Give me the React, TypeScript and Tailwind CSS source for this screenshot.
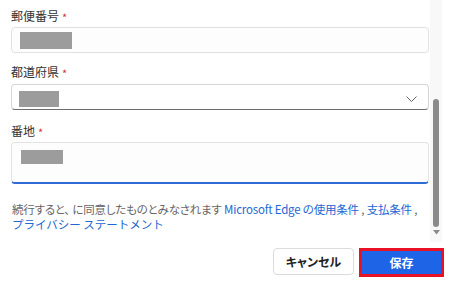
import React from 'react';

// --- FORM FIELD LABEL ---
const FieldLabel = ({ text }: { text: string }) => (
    <div className="flex h-[18px] items-center text-[12px] leading-[18px] text-[#333]">
        <span>{text}</span>
        <span className="ml-[3px] mt-[2px] text-[11px] text-[#d13438]">*</span>
    </div>
);

// --- REDACTED VALUE (gray block) ---
const Redacted = ({ w, h }: { w: string; h: string }) => (
    <div className={`${w} ${h} bg-[#9c9c9c]`} />
);

export default function App() {
    return (
        <div
            className="h-[283px] w-[450px] overflow-hidden bg-white [font-feature-settings:'palt']"
            style={{ fontFamily: '"Noto Sans CJK JP", "Noto Sans", sans-serif' }}
        >
            {/* Scrollable form area */}
            <div className="flex h-[242px]">
                <div className="flex w-[430px] flex-col pl-[11px] pr-[1px] pt-[7px]">
                    <FieldLabel text="郵便番号" />
                    <div className="mt-[2px] flex h-[26px] items-center rounded-[4px] border border-[#e1e1e1] bg-[#fdfdfd] pl-[8px]">
                        <Redacted w="w-[52px]" h="h-[17px]" />
                    </div>

                    <div className="mt-[10px]">
                        <FieldLabel text="都道府県" />
                    </div>
                    <div className="mt-[3px] flex h-[26px] items-start justify-between rounded-[4px] border border-[#d6d6d6] border-b-[#6e6e6e] bg-white pl-[7px] pr-[11px] pt-[6px]">
                        <Redacted w="w-[40px]" h="h-[16px]" />
                        <svg width="11" height="6" viewBox="0 0 11 6" className="mt-[5px]">
                            <path d="M0.5 0.5 L5.5 5.5 L10.5 0.5" fill="none" stroke="#666" strokeWidth="1" />
                        </svg>
                    </div>

                    <div className="mt-[12px]">
                        <FieldLabel text="番地" />
                    </div>
                    <div className="mt-[2px] h-[42px] rounded-[4px] border border-[#e3e3e3] border-b-2 border-b-[#2f6bd6] bg-[#fdfdfd] pl-[9px] pt-[7px]">
                        <Redacted w="w-[42px]" h="h-[14px]" />
                    </div>

                    <p className="mt-[18px] pl-[1px] text-[11.5px] leading-[15px] tracking-[-0.2px] text-[#666]">
                        続行すると、 に同意したものとみなされます{' '}
                        <span className="text-[#2268d4]">Microsoft Edge の使用条件</span> ,{' '}
                        <span className="text-[#2268d4]">支払条件</span> ,
                        <br />
                        <span className="tracking-normal text-[#2268d4] [font-feature-settings:normal]">
                            プライバシー ステートメント
                        </span>
                    </p>
                </div>

                {/* Scrollbar */}
                <div className="flex w-[12px] flex-col items-center bg-[#f8f8f8]">
                    <div className="mt-[99px] h-[128px] w-[6px] rounded-full bg-[#8a8a8a]" />
                    <svg width="7" height="5" viewBox="0 0 7 5" className="mt-[3px]">
                        <path d="M0 0 L7 0 L3.5 4.5 Z" fill="#8a8a8a" />
                    </svg>
                </div>
            </div>

            {/* Footer buttons */}
            <div className="flex justify-end gap-[5px] pr-[6px] pt-[6px]">
                <button className="flex h-[27px] w-[81px] items-center justify-center rounded-[4px] border border-[#dcdcdc] bg-white text-[12px] font-bold text-[#222]">
                    キャンセル
                </button>
                <button className="flex h-[29px] w-[85px] items-center justify-center border-[3px] border-[#e81224] bg-[#1d64e6] text-[12px] font-bold text-white">
                    保存
                </button>
            </div>
        </div>
    );
}
